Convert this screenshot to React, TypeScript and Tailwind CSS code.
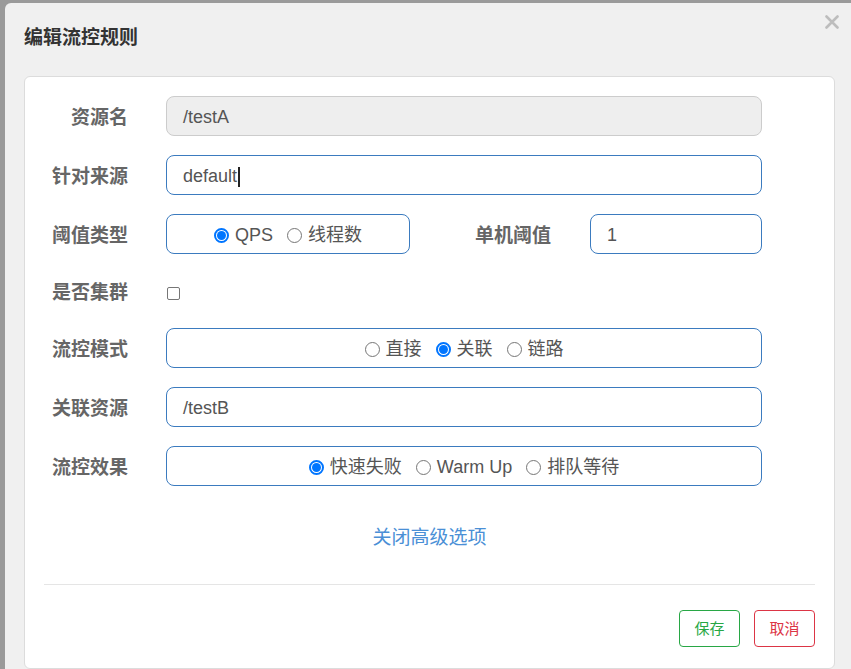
import React from "react";

const font = { fontFamily: '"Liberation Sans", "Noto Sans CJK SC", sans-serif' };

const Label: React.FC<{ text: string; className?: string }> = ({ text, className = "w-[84px]" }) => (
    <div className={`${className} shrink-0 pt-[5px] text-right text-[19px] font-bold text-[#666]`}>{text}</div>
);

const Radio: React.FC<{ label: string; checked?: boolean }> = ({ label, checked }) => (
    <label className="flex items-center gap-[6px] text-[18px] text-[#555]">
        {checked ? (
            <span className="flex h-[15px] w-[15px] items-center justify-center rounded-full border-[2px] border-[#0075ff] bg-white">
                <span className="h-[9px] w-[9px] rounded-full bg-[#0075ff]" />
            </span>
        ) : (
            <span className="h-[15px] w-[15px] rounded-full border border-[#767676] bg-white" />
        )}
        {label}
    </label>
);

const boxCls = "h-[40px] rounded-[8px] border border-[#3b7bbf] bg-white";

const App: React.FC = () => {
    return (
        <div className="h-[669px] w-[851px] overflow-hidden bg-[#9a9a9a] pl-[5px] pt-[3px]" style={font}>
            <div className="flex h-full flex-col rounded-tl-[6px] bg-[#f0f0f0]">
                {/* header */}
                <div className="flex h-[73px] shrink-0 items-start justify-between pl-[19px] pr-[12px]">
                    <h4 className="mt-[21px] text-[19px] font-bold text-[#333]">编辑流控规则</h4>
                    <svg className="mt-[12px]" width="14" height="14" viewBox="0 0 14 14">
                        <path d="M1.5 1.5 L12.5 12.5 M12.5 1.5 L1.5 12.5" stroke="#bdbdbd" strokeWidth="2.6" strokeLinecap="round" />
                    </svg>
                </div>

                {/* body */}
                <div className="ml-[19px] mr-[16px] flex flex-1 flex-col rounded-[6px] border border-[#dcdcdc] bg-white px-[19px] pt-[19px] pb-[19px]">
                    <div className="flex flex-col gap-[19px] pr-[53px]">
                        <div className="flex items-center gap-[38px]">
                            <Label text="资源名" />
                            <div className="flex h-[40px] flex-1 items-center rounded-[8px] border border-[#cccccc] bg-[#eeeeee] pl-[16px] pt-[3px] text-[18px] text-[#555]">
                                /testA
                            </div>
                        </div>
                        <div className="flex items-center gap-[38px]">
                            <Label text="针对来源" />
                            <div className={`${boxCls} flex flex-1 items-center pl-[16px] pt-[3px] text-[18px] text-[#555]`}>
                                default
                                <span className="ml-[1px] h-[20px] w-[2px] bg-[#222]" />
                            </div>
                        </div>
                        <div className="flex items-center">
                            <Label text="阈值类型" />
                            <div className={`${boxCls} ml-[38px] flex w-[244px] items-center justify-center gap-[14px] pt-[3px]`}>
                                <Radio label="QPS" checked />
                                <Radio label="线程数" />
                            </div>
                            <Label text="单机阈值" className="w-[141px]" />
                            <div className={`${boxCls} ml-[39px] flex flex-1 items-center pl-[16px] pt-[3px] text-[18px] text-[#555]`}>
                                1
                            </div>
                        </div>
                        <div className="flex h-[36px] items-center gap-[38px]">
                            <Label text="是否集群" />
                            <span className="ml-[1px] mt-[5px] h-[13px] w-[13px] rounded-[2px] border border-[#767676] bg-white" />
                        </div>
                        <div className="flex items-center gap-[38px]">
                            <Label text="流控模式" />
                            <div className={`${boxCls} flex flex-1 items-center justify-center gap-[14px] pt-[3px]`}>
                                <Radio label="直接" />
                                <Radio label="关联" checked />
                                <Radio label="链路" />
                            </div>
                        </div>
                        <div className="flex items-center gap-[38px]">
                            <Label text="关联资源" />
                            <div className={`${boxCls} flex flex-1 items-center pl-[16px] pt-[3px] text-[18px] text-[#555]`}>
                                /testB
                            </div>
                        </div>
                        <div className="flex items-center gap-[38px]">
                            <Label text="流控效果" />
                            <div className={`${boxCls} flex flex-1 items-center justify-center gap-[14px] pt-[3px]`}>
                                <Radio label="快速失败" checked />
                                <Radio label="Warm Up" />
                                <Radio label="排队等待" />
                            </div>
                        </div>
                    </div>

                    <div className="mt-[38px] text-center text-[19px] text-[#4a8fd6]">关闭高级选项</div>

                    <div className="mt-[31px] border-t border-[#e5e5e5]" />

                    <div className="mt-[25px] flex justify-end gap-[14px]">
                        <button className="h-[37px] w-[61px] rounded-[4px] border border-[#28a745] bg-white pt-[2px] text-[15px] text-[#28a745]">
                            保存
                        </button>
                        <button className="h-[37px] w-[61px] rounded-[4px] border border-[#dc3545] bg-white pt-[2px] text-[15px] text-[#dc3545]">
                            取消
                        </button>
                    </div>
                </div>
            </div>
        </div>
    );
};

export default App;
